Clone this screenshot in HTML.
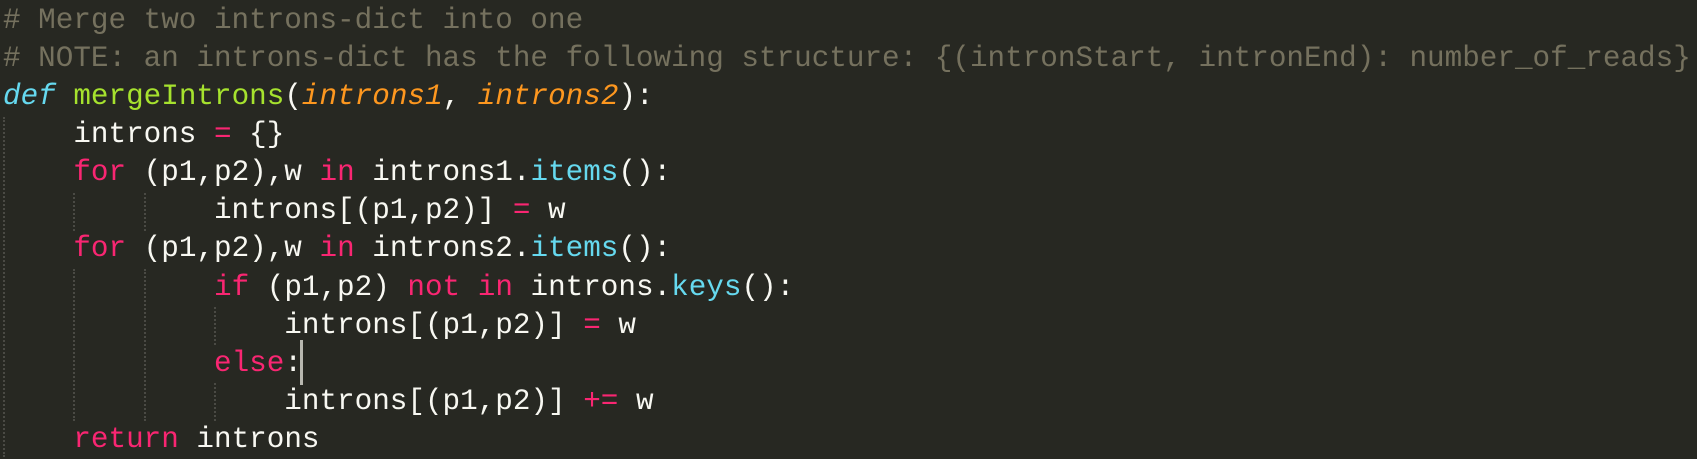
<!DOCTYPE html>
<html><head><meta charset="utf-8"><style>
html,body{margin:0;padding:0;background:#272822;width:1697px;height:457px;overflow:hidden}
#c{position:absolute;left:3px;top:2px;font-family:"Liberation Mono",monospace;font-size:29.3px;line-height:38.08px;color:#F8F8F2;white-space:pre}
.cm{color:#75715E}.k{color:#F92672}.d{color:#66D9EF;font-style:italic}.f{color:#A6E22E}.p{color:#FD971F;font-style:italic}.b{color:#66D9EF}
.g{position:absolute;width:0;border-left:2px dotted #4a4a44}
#cur{position:absolute;left:300px;top:340px;width:3px;height:45px;background:#b8b8b0}
</style></head><body>
<div class="g" style="left:3px;top:117px;height:340px"></div>
<div class="g" style="left:73px;top:193px;height:38px"></div>
<div class="g" style="left:144px;top:193px;height:38px"></div>
<div class="g" style="left:73px;top:269px;height:152px"></div>
<div class="g" style="left:144px;top:269px;height:152px"></div>
<div class="g" style="left:214px;top:307px;height:38px"></div>
<div class="g" style="left:214px;top:383px;height:38px"></div>
<div id="c"><span class="cm"># Merge two introns-dict into one</span>
<span class="cm"># NOTE: an introns-dict has the following structure: {(intronStart, intronEnd): number_of_reads}</span>
<span class="d">def</span> <span class="f">mergeIntrons</span>(<span class="p">introns1</span>, <span class="p">introns2</span>):
    introns <span class="k">=</span> {}
    <span class="k">for</span> (p1,p2),w <span class="k">in</span> introns1.<span class="b">items</span>():
            introns[(p1,p2)] <span class="k">=</span> w
    <span class="k">for</span> (p1,p2),w <span class="k">in</span> introns2.<span class="b">items</span>():
            <span class="k">if</span> (p1,p2) <span class="k">not</span> <span class="k">in</span> introns.<span class="b">keys</span>():
                introns[(p1,p2)] <span class="k">=</span> w
            <span class="k">else</span>:
                introns[(p1,p2)] <span class="k">+=</span> w
    <span class="k">return</span> introns</div>
<div id="cur"></div>
</body></html>
